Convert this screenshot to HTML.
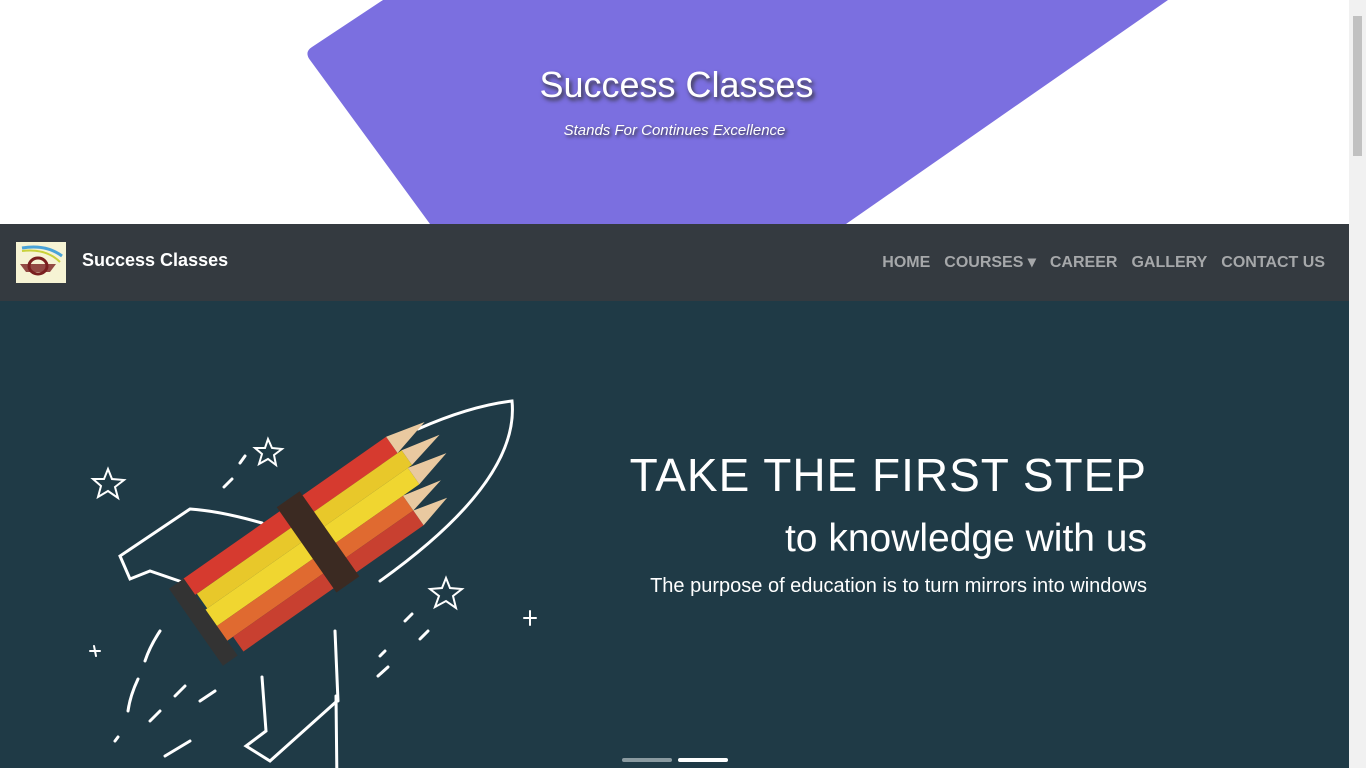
<!DOCTYPE html>
<html><head><meta charset="utf-8"><style>
*{margin:0;padding:0;box-sizing:border-box}
body{width:1366px;height:768px;overflow:hidden;background:#fff;font-family:"Liberation Sans",sans-serif;position:relative}
.top{position:absolute;left:0;top:0;width:1349px;height:224px;background:#fff;overflow:hidden}
.t1{position:absolute;left:0;width:1349px;top:64px;text-align:center;color:#fff;font-size:36px;text-shadow:2px 3px 4px #333;padding-left:4px}
.t2{position:absolute;left:0;width:1349px;top:122px;text-align:center;color:#fff;font-size:15px;font-style:italic;text-shadow:2px 2px 3px #333}
nav{position:absolute;top:224px;left:0;width:1349px;height:77px;background:#343a40}
.logo{position:absolute;left:16px;top:18px;width:50px;height:41px;background:#f6f3d4}
.brand{position:absolute;left:82px;top:26px;color:#fff;font-size:18px;font-weight:bold}
.menu{position:absolute;right:24px;top:28px;color:#a6a8aa;font-size:16px;font-weight:bold}
.menu span{margin-left:14px}
.hero{position:absolute;top:301px;left:0;width:1349px;height:467px;background:#1f3a46}
.h1{position:absolute;right:202px;top:147px;color:#fff;font-size:46px;letter-spacing:1px}
.h2{position:absolute;right:202px;top:216px;color:#fff;font-size:39px}
.h3{position:absolute;right:202px;top:274px;color:#fff;font-size:20px}
.sb{position:absolute;right:0;top:0;width:17px;height:768px;background:#f1f1f1}
.sb div{position:absolute;left:4px;top:16px;width:9px;height:140px;background:#c1c1c1}
</style></head><body>
<div class="top">
<svg width="1349" height="224" style="position:absolute;left:0;top:0"><path d="M383 0 L1168 0 L846 224 L430 224 L310 60 Q304 52 312 47 Z" fill="#7b6fe0"/></svg>
<div class="t1">Success Classes</div>
<div class="t2">Stands For Continues Excellence</div>
</div>
<nav>
<div class="logo"><svg width="50" height="41"><path d="M6 6 Q30 2 46 14" stroke="#4aa3d8" stroke-width="3" fill="none"/><path d="M6 9 Q30 6 44 20" stroke="#c9d13b" stroke-width="2" fill="none"/><ellipse cx="22" cy="24" rx="9" ry="8" fill="none" stroke="#7a1f1f" stroke-width="3"/><path d="M4 22 L40 22 L34 30 L10 30 Z" fill="#7a1f1f" opacity=".8"/></svg></div>
<div class="brand">Success Classes</div>
<div class="menu"><span>HOME</span><span>COURSES ▾</span><span>CAREER</span><span>GALLERY</span><span>CONTACT US</span></div>
</nav>
<div class="hero">
<svg width="560" height="467" style="position:absolute;left:0;top:0" fill="none" stroke="#fff" stroke-width="3" stroke-linecap="round">
<path d="M337 485 L336 395"/>
<path d="M335 330 L338 400"/>
<path d="M262 376 L266 430 L246 445 L270 460 L337 400"/>
<path d="M262 222 Q220 210 190 208 L120 255 L130 278 L150 270 L185 282"/>
<path d="M418 128 Q470 105 512 100 Q520 180 380 280"/>
<path d="M240 162 L245 155 M232 178 L224 186 M160 330 Q150 345 145 360 M138 378 Q130 395 128 410 M150 420 L160 410 M175 395 L185 385 M165 455 L190 440 M200 400 L215 390 M115 440 L118 436 M405 320 L412 313 M420 338 L428 330 M380 355 L385 350 M378 375 L388 366"/>
<path d="M108 168 L112 178 L124 179 L115 186 L118 197 L108 190 L98 196 L101 185 L93 178 L104 178Z" stroke-width="2"/>
<path d="M268 138 L272 147 L282 148 L274 154 L276 164 L268 158 L259 163 L262 153 L255 147 L265 147Z" stroke-width="2"/>
<path d="M446 277 L450 287 L462 288 L453 295 L456 307 L446 300 L435 306 L439 295 L430 288 L442 287Z" stroke-width="2"/>
<path d="M530 310 L530 324 M524 317 L536 317 M94 345 L96 355 M90 350 L100 350" stroke-width="2"/>
<g transform="translate(330,230) rotate(-35)">
<rect x="-150" y="-45" width="250" height="20" fill="#d63a2f" stroke="none"/>
<rect x="-145" y="-25" width="250" height="18" fill="#e8c82a" stroke="none"/>
<rect x="-150" y="-7" width="250" height="20" fill="#f0d630" stroke="none"/>
<rect x="-150" y="13" width="230" height="18" fill="#e06a30" stroke="none"/>
<rect x="-140" y="31" width="220" height="18" fill="#c84030" stroke="none"/>
<rect x="-165" y="-45" width="18" height="94" fill="#333" stroke="none"/>
<path d="M100 -45 L140 -35 L100 -25Z M105 -25 L145 -16 L105 -7Z M100 -7 L140 3 L100 13Z M80 13 L120 22 L80 31Z M80 31 L115 40 L80 49Z" fill="#e9c9a0" stroke="none"/>
<rect x="-30" y="-50" width="28" height="104" fill="#3b2a22" stroke="none"/>
</g>
</svg>
<div class="h1">TAKE THE FIRST STEP</div>
<div class="h2">to knowledge with us</div>
<div class="h3">The purpose of education is to turn mirrors into windows</div>
<div style="position:absolute;left:622px;top:457px;width:50px;height:4px;border-radius:2px;background:#8a9aa0"></div>
<div style="position:absolute;left:678px;top:457px;width:50px;height:4px;border-radius:2px;background:#fff"></div>
</div>
<div class="sb"><div></div></div>
</body></html>
